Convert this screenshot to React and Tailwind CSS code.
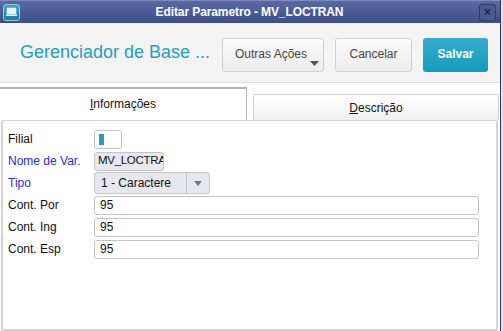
import React from 'react';

const FONT = { fontFamily: '"Liberation Sans", Arial, sans-serif' };

const Row = ({ label, blue, children }) => (
    <div className="flex items-center h-[22px]">
        <span className={`w-[86px] text-[12px] ${blue ? 'text-[#2b2bd6]' : 'text-[#111]'}`}>{label}</span>
        {children}
    </div>
);

const TextBox = ({ value, className = '' }) => (
    <div className={`h-[19px] rounded-[3px] border border-[#c4c4c4] bg-white flex items-center px-[5px] text-[12px] text-[#111] ${className}`}>
        {value}
    </div>
);

const App = () => {
    return (
        <div className="w-[503px] h-[331px] flex bg-white overflow-hidden" style={FONT}>
            <div className="w-[500px] flex flex-col">
                {/* Title bar */}
                <div className="h-[23px] flex items-center px-[3px] bg-gradient-to-b from-[#5a69a3] to-[#3e4e89] border-t border-[#7d8bbd]">
                    <div className="w-[17px] h-[17px] rounded-[3px] border border-[#9fc6da] bg-gradient-to-b from-[#3aa3c6] to-[#1c7fa4] flex items-center justify-center">
                        <svg width="11" height="10" viewBox="0 0 11 10">
                            <rect x="1" y="1" width="9" height="6" fill="#e9f3f8" stroke="#dfeef5" strokeWidth="0.6" />
                            <rect x="0" y="7.5" width="11" height="1.5" fill="#e9f3f8" />
                        </svg>
                    </div>
                    <div className="flex-1 text-center text-white font-bold text-[12px] tracking-[-0.1px]">Editar Parametro - MV_LOCTRAN</div>
                    <div className="w-[17px] h-[17px] mr-[1px] rounded-[3px] border border-[#2d3a6a] bg-[#4a5990] flex items-center justify-center text-[#1e2440] text-[12px] font-bold leading-none">
                        ×
                    </div>
                </div>

                {/* Header */}
                <div className="h-[60px] flex items-center bg-[#f3f3f3] border-b border-[#dcdcdc] pl-[20px] pr-[12px]">
                    <div className="flex-1 min-w-0 whitespace-nowrap text-[18px] text-[#1f9fc3]">Gerenciador de Base ...</div>
                    <div className="flex shrink-0 gap-[11px] mt-[4px]">
                        <div className="relative w-[102px] h-[34px] rounded-[3px] border border-[#d0d0d0] bg-gradient-to-b from-[#fbfbfb] to-[#ececec] text-[12px] text-[#444] flex items-center pl-[12px] pb-[1px]">
                            Outras Ações
                            <svg className="absolute right-[4px] bottom-[5px]" width="9" height="5" viewBox="0 0 9 5">
                                <path d="M0 0 L9 0 L4.5 5 Z" fill="#555" />
                            </svg>
                        </div>
                        <div className="w-[77px] h-[34px] rounded-[3px] border border-[#d0d0d0] bg-gradient-to-b from-[#fbfbfb] to-[#ececec] text-[12px] text-[#444] flex items-center justify-center pb-[1px]">
                            Cancelar
                        </div>
                        <div className="w-[65px] h-[34px] rounded-[3px] bg-gradient-to-b from-[#34adcc] to-[#139bbd] text-[12px] text-white font-bold flex items-center justify-center pb-[1px]">
                            Salvar
                        </div>
                    </div>
                </div>

                {/* Tabs */}
                <div className="flex mt-[4px] h-[33px] items-end">
                    <div className="w-[247px] h-[33px] border-t-2 border-r border-[#b5b5b5] bg-white flex items-center justify-center text-[12px] text-[#111] pb-[1px]">
                        <span><span className="underline">I</span>nformações</span>
                    </div>
                    <div className="ml-[6px] w-[246px] h-[26px] rounded-t-[2px] border border-b-0 border-[#cfcfcf] bg-gradient-to-b from-[#ffffff] to-[#f1f1f1] flex items-center justify-center text-[12px] text-[#111] pt-[1px]">
                        <span><span className="underline">D</span>escrição</span>
                    </div>
                </div>

                {/* Panel */}
                <div className="flex-1 ml-[1px] mr-[2px] rounded-[2px] border-2 border-[#d4d4d4] border-t bg-white pt-[7px] pl-[5px] pr-[17px]">
                    <Row label="Filial">
                        <div className="w-[28px] h-[19px] rounded-[3px] border border-[#c4c4c4] bg-white flex items-center pl-[4px]">
                            <div className="w-[1px] h-[11px] bg-[#d9532c]" />
                            <div className="w-[4px] h-[11px] bg-[#2c9bb8]" />
                        </div>
                    </Row>
                    <Row label="Nome de Var." blue>
                        <div className="w-[70px] h-[19px] rounded-[3px] border border-[#c4c4c4] bg-[#e6e8ee] flex items-center pl-[3px] text-[11.5px] tracking-[-0.3px] text-[#111] overflow-hidden whitespace-nowrap">
                            MV_LOCTRAN
                        </div>
                    </Row>
                    <Row label="Tipo" blue>
                        <div className="w-[116px] h-[22px] rounded-[3px] border border-[#c4c4c4] bg-[#e6e8ee] flex items-center text-[12px] text-[#111]">
                            <span className="flex-1 pl-[6px]">1 - Caractere</span>
                            <div className="w-[23px] h-full border-l border-[#c4c4c4] flex items-center justify-center">
                                <svg width="8" height="5" viewBox="0 0 8 5">
                                    <path d="M0 0 L8 0 L4 5 Z" fill="#777" />
                                </svg>
                            </div>
                        </div>
                    </Row>
                    <Row label="Cont. Por">
                        <TextBox value="95" className="flex-1" />
                    </Row>
                    <Row label="Cont. Ing">
                        <TextBox value="95" className="flex-1" />
                    </Row>
                    <Row label="Cont. Esp">
                        <TextBox value="95" className="flex-1" />
                    </Row>
                </div>
            </div>
            <div className="w-px bg-[#2b3966]" />
            <div className="w-[2px] bg-[#e4e4e4]" />
        </div>
    );
};

export default App;
